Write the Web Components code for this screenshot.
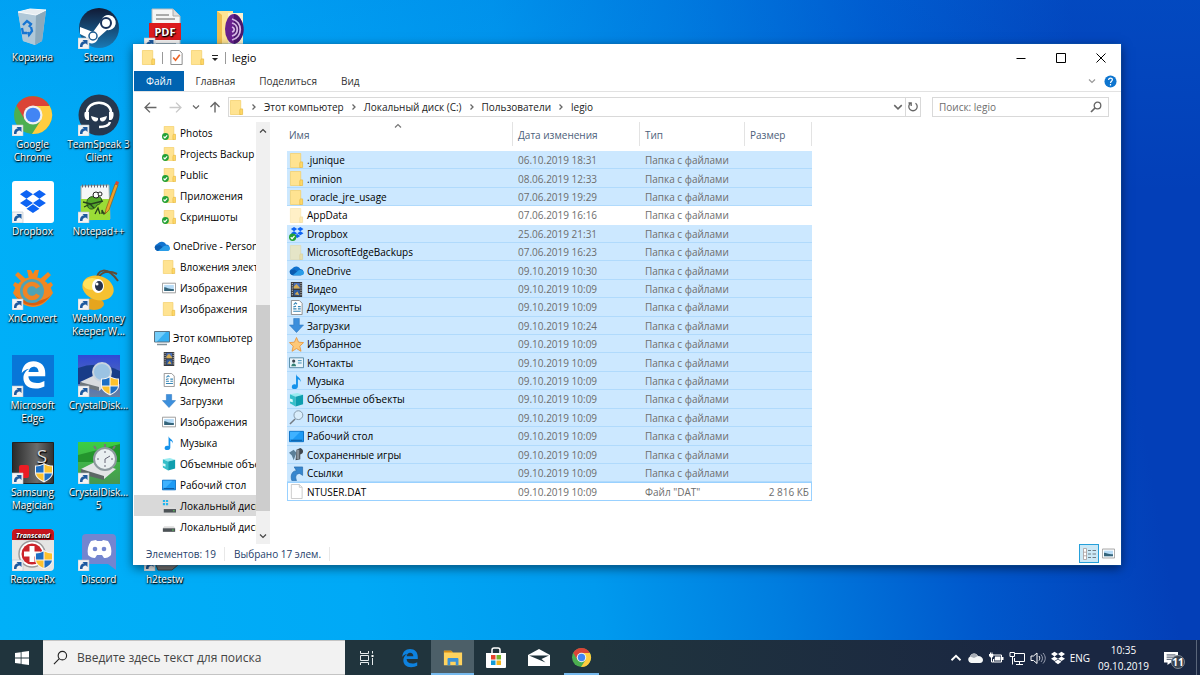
<!DOCTYPE html>
<html lang="ru">
<head>
<meta charset="utf-8">
<title>legio</title>
<style>
	html, body {
		height: 100%;
		margin: 0;
	}

	body {
		font: 10px/14px "Open Sans", "Noto Sans", sans-serif;
		color: #000;
		overflow: hidden;
	}
</style>
</head>
<body>
<desk-top></desk-top>

<script>
const FOLDER = `<path d="M1.500.500h11v15h-11z" fill="#ffe391" stroke="#f3cf69" stroke-width=".8"/><path d="M12 9.500h2.500v6h-3V11z" fill="#ffd866" stroke="#e8bc48" stroke-width=".8"/>`;
const TICK = `<circle cx="3.900" cy="12" r="3.900" fill="#23a136"/><path d="M1.800 12l1.500 1.600 2.600-3" fill="none" stroke="#fff" stroke-width="1.300"/>`;
const BOX = `<path d="M12 0l12 8-12 8L0 8zM36 0l12 8-12 8-12-8zM0 24l12-8 12 8-12 8zM36 16l12 8-12 8-12-8zM12 34.500l12-8 12 8-12 8z"/>`;
const SHIELD = `<g transform="translate(23 21)"><path d="M9 0c3 2 6 2.500 9 2.500V10c0 4-4 7-9 9.500C4 17 0 14 0 10V2.500C3 2.500 6 2 9 0z" fill="#f4f4f4"/><path d="M8.500 1.500V9.500H1V3.500c3 0 5-.7 7.500-2z" fill="#1d6fc4"/><path d="M9.500 1.500v8H17v-6c-3 0-5-.7-7.500-2z" fill="#fdc12d"/><path d="M8.500 10.500v7.500C4.500 16 1.500 13.500 1 10.500z" fill="#fdc12d"/><path d="M9.500 10.500v7.500c4-2 7-4.500 7.500-7.500z" fill="#1d6fc4"/></g>`;
const LINK = `<path d="M0 31h11v11H0z" fill="#f3f3f3" stroke="#b9c3cc" stroke-width=".6"/><path d="M2 40c0-4 1.500-5.500 4-5.500L4.500 33H9.500v5L8 36.500C5.500 36.500 4.500 38 4.500 40z" fill="#1e5a9f"/>`;
const CHROME = `<circle cx="21" cy="21" r="19" fill="#4caf50"/><path d="M21 11.500H37.500A19 19 0 0 1 20 40L29 26z" fill="#ffcd40"/><path d="M4.500 11.500L13 26 21 12H37.500A19 19 0 0 0 4.500 11.500z" fill="#db4437"/><circle cx="21" cy="21" r="9.500" fill="#f1f1f1"/><circle cx="21" cy="21" r="7.300" fill="#4285f4"/>`;
const EDGE = `<path d="M8 19C9 10 14 5 22 5c9 0 14 6 14 14v4H16c0 5 4 8 10 8 4 0 6-1 9-2.500v6.500c-3 1.500-6 2.500-11 2.500C15 37.500 10 32 10 25c0-5 3-9 7-11-4 .5-7 2.500-9 5zM16 18h12c0-4-2-6.500-6-6.500-3 0-5.500 2.500-6 6.500z"/>`;
const PICTURE = `<path d="M.5 2.500h15v11H.5z" fill="#fff" stroke="#929292"/><path d="M2.500 4.500h11v7h-11z" fill="#b8dcf7"/><path d="M2.500 7c3 0 4 2 11 2v2.500h-11z" fill="#35647a"/>`;
const DISK = `<path d="M1 9l1.500-2h11L15 9v4H1z" fill="#ddd"/><path d="M1 9.500h14v4H1z" fill="#4c5256"/><path d="M11.500 11.500h2" stroke="#60e060"/>`;

// each entry: [viewBox, markup]
const ICONS = {
	folder: ["0 0 16 16", FOLDER],
	faded: ["0 0 16 16", `<g opacity=".5">${FOLDER}</g>`],
	synced: ["0 0 16 16", `<g transform="translate(1 0)">${FOLDER}</g>${TICK}`],
	dropsync: ["0 0 16 16", `<g transform="translate(2 1) scale(.28)" fill="#0d63f3">${BOX}</g>${TICK}`],
	cloud: ["0 0 16 16", `<path d="M4 13a3.700 3.700 0 0 1-.5-7.200A5 5 0 0 1 12 6.500 3.300 3.300 0 0 1 13 13z" fill="#1173cf"/><path d="M6 7l7 6H4a3.700 3.700 0 0 1-3-5z" fill="#0a5cb0"/><path d="M4 13l6-5c3-1.500 6 .5 6 2.500S14.500 13 13 13z" fill="#2a9de8"/>`],
	video: ["0 0 16 16", `<path d="M2 0h12v16H2z" fill="#38393c"/><path d="M5 1h6.500v6H5z" fill="#4b70b8"/><path d="M5 8.500h6.500v6H5z" fill="#315b9f"/><path d="M5 5l3-3 3.500 4v1H5zM6 13l3-3 2 4z" fill="#d6ad54"/><path d="M3.500 1v14M12.800 1v14" stroke="#ddd" stroke-dasharray="1.200 1.200"/>`],
	docs: ["0 0 16 16", `<path d="M2.500.5h8.500l3 3v12H2.500z" fill="#fff" stroke="#8c8c8c"/><path d="M5 5l2-2 1.500 1.500M4.500 9.500h3.500M9.500 7h3M9.500 9.500h3M4.500 12h8M4.500 7.500l3-1" fill="none" stroke="#3585b5" stroke-width="1.200"/>`],
	download: ["0 0 16 16", `<path d="M5 .5h6v7h4.500L8 15.500.5 7.500H5z" fill="#3c8fdc" stroke="#2a75bf" stroke-width=".6"/>`],
	star: ["0 0 16 16", `<path d="M8 .5l2.200 5 5.300.5-4 3.700 1.300 5.500L8 12.300l-4.800 2.900 1.300-5.500-4-3.700 5.300-.5z" fill="#fdc878" stroke="#ea9437" stroke-width=".9"/>`],
	contact: ["0 0 16 16", `<path d="M.5 3h15v10.500H.5z" fill="#e8f4fb" stroke="#558aa5"/><circle cx="5" cy="6.500" r="1.700" fill="#3d4650"/><path d="M2.500 12c0-4 5-4 5 0z" fill="#348075"/><path d="M9.500 6h4M9.500 8.500h4" stroke="#358ab3"/>`],
	music: ["0 0 16 16", `<path d="M7.500 0c.5 3.500 5.500 3.500 5 8.500-.5-2-2-3-3-3v7.500c0 4-6.500 4-6.500 1s2.500-3.500 4.500-2.500z" fill="#1592eb"/>`],
	cube: ["0 0 16 16", `<path d="M1 2.500L9 1l6 2-8 2z" fill="#9aebf0"/><path d="M1 2.500L7 5v10.500L1 12z" fill="#35bfc9"/><path d="M7 5l8-2v10l-8 2.500z" fill="#0f9eae"/><path d="M1 7l3 1v3l-3-1z" fill="#d9fbfc"/>`],
	lens: ["0 0 16 16", `<path d="M1 15l5.500-5.500" stroke="#737b83" stroke-width="1.600"/><circle cx="10" cy="5.500" r="4.700" fill="#d9edfb" stroke="#8397a8"/>`],
	screen: ["0 0 16 16", `<path d="M.5 2.500h15v11H.5z" fill="#1d9bf5" stroke="#086cc0"/><path d="M2 12h12" stroke="#0b5398"/><path d="M1 3h11L4 11H1z" fill="#3fb2ff"/>`],
	games: ["0 0 16 16", `<path d="M0 6l5-3 3 3-3 8-2-5z" fill="#5c7f98"/><path d="M8 3l4-2c3 1 4 4 2 6l-2 1v5l-5 1z" fill="#3f464d"/><path d="M8 3h3v10H8z" fill="#879098"/>`],
	shortcut: ["0 0 16 16", `<path d="M3 15.500C1 9 4 5 8 5L5.500 1H14.500V10L11.500 8C8 8 6 11 8 15.500z" fill="#3686ce" stroke="#2368aa" stroke-width=".7"/>`],
	file: ["0 0 16 16", `<path d="M2.500.5h8.500l3 3v12H2.500z" fill="#fff" stroke="#bcbcbc" stroke-width=".8"/><path d="M11 .5v3h3" fill="none" stroke="#bcbcbc" stroke-width=".8"/>`],
	picture: ["0 0 16 16", PICTURE],
	pc: ["0 0 16 16", `<path d="M.5 1.500h15v10.500H.5z" fill="#36b0f2" stroke="#5d7381"/><path d="M1 2h11L3 11.500H1z" fill="#73cdfa"/><path d="M3 14.500h10" stroke="#81919b" stroke-width="1.500"/>`],
	disk: ["0 0 16 16", DISK],
	windisk: ["0 0 16 16", `<g transform="translate(1 2)">${DISK}</g><path d="M1 1h2.500v2.500H1zM4.500 1H7v2.500H4.500zM1 4.500h2.500V7H1zM4.500 4.500H7V7H4.500z" fill="#22b5ed"/>`],
	check: ["0 0 16 16", `<path d="M2 .5h9l3 3v12H2z" fill="#fff" stroke="#858585"/><path d="M4.500 8l2.500 3 4.500-6" fill="none" stroke="#ed6425" stroke-width="1.700"/>`],
	more: ["0 0 8 8", `<path d="M1 1.500h6" stroke="#222"/><path d="M1 4h6L4 7z" fill="#222"/>`],
	minimize: ["0 0 10 10", `<path d="M.5 5.500h9" stroke="#000"/>`],
	maximize: ["0 0 10 10", `<path d="M.5.5h9v9h-9z" fill="none" stroke="#000"/>`],
	close: ["0 0 10 10", `<path d="M.5.5l9 9M9.500.5l-9 9" stroke="#000"/>`],
	back: ["0 0 12 12", `<path d="M11.500 6H1.500M5.500 1.500L1 6l4.500 4.500" fill="none" stroke="#666" stroke-width="1.300"/>`],
	forward: ["0 0 12 12", `<path d="M.5 6h10M6.500 1.500L11 6l-4.500 4.500" fill="none" stroke="#c9c9c9" stroke-width="1.300"/>`],
	up: ["0 0 12 12", `<path d="M6 11.500V1.500M1.500 6L6 1.500 10.500 6" fill="none" stroke="#666" stroke-width="1.400"/>`],
	down: ["0 0 8 8", `<path d="M1 2.500L4 5.500l3-3" fill="none" stroke="currentColor" stroke-width="1.200"/>`],
	top: ["0 0 8 8", `<path d="M1 5.500L4 2.500l3 3" fill="none" stroke="currentColor" stroke-width="1.200"/>`],
	right: ["0 0 8 8", `<path d="M2.500 1.500L5 4 2.500 6.500" fill="none" stroke="#666" stroke-width="1.300"/>`],
	refresh: ["0 0 12 12", `<path d="M8.500 2.200A4.200 4.200 0 1 1 3.500 2.200M1.500 2h2.700v3" fill="none" stroke="#666" stroke-width="1.300"/>`],
	find: ["0 0 12 12", `<circle cx="7.500" cy="4.500" r="3.300" fill="none" stroke="#666" stroke-width="1.300"/><path d="M5 7L1 11" stroke="#666" stroke-width="1.700"/>`],
	help: ["0 0 14 14", `<circle cx="7" cy="7" r="6.500" fill="#0e75cf"/><path d="M5 5.500C5 2.500 9.200 2.700 9 5.300 8.800 6.700 7 6.700 7 8.500M7 9.800v1.500" fill="none" stroke="#fff" stroke-width="1.300"/>`],
	details: ["0 0 14 14", `<path d="M1.500 1.500h3v11h-3zM1.500 5.200h3M1.500 8.800h3" fill="#fff" stroke="#a79a9a" stroke-width=".8"/><path d="M6 3.500h3M10.500 3.500H14M6 7h3M10.500 7H14M6 10.500h3M10.500 10.500H14" stroke="#6f7d86"/>`],

	// desktop
	bin: ["0 0 42 42", `<path d="M6 5l28-2-4 31-7 4-12-4z" fill="#c5d5df" opacity=".9"/><path d="M6 5l18 3-1 30-12-4z" fill="#b0c8d8"/><path d="M24 8l10-5-4 31-7 4z" fill="#8da9bb"/><path d="M6 5l12-3 16 1-10 5z" fill="#e7edf1" stroke="#f7fafb"/><path d="M11 18l4-4 4 3-2 3M10 21l1 5h4M19 20l1 4-3 4-1-3" fill="none" stroke="#1675d2" stroke-width="2.300"/>`],
	steam: ["0 0 42 42", `<linearGradient id="st" x2="0" y2="1"><stop stop-color="#111a35"/><stop offset="1" stop-color="#1a79b4"/></linearGradient><circle cx="21" cy="21" r="20" fill="url(#st)"/><path d="M2 20l13 5 8-11a7.500 7.500 0 1 1 6 9l-9 8a6 6 0 0 1-12-1L2 27z" fill="#fff"/><circle cx="28" cy="16" r="5" fill="#fff" stroke="#17305a" stroke-width="2"/><circle cx="15" cy="29" r="4" fill="none" stroke="#1b5b91" stroke-width="1.500"/>${LINK}`],
	pdf: ["0 0 42 42", `<path d="M8 2h21l7 7v32H8z" fill="#f5f5f5" stroke="#bbb"/><path d="M29 2v7h7" fill="#ddd" stroke="#aaa"/><path d="M12 8h13M12 12h19M12 37h20" stroke="#aaa" stroke-width="2"/><path d="M5 16h32v17H5z" fill="#dc1a1e"/><text x="21" y="29" font-size="11" font-weight="700" fill="#fff" text-anchor="middle">PDF</text>${LINK}`],
	tor: ["0 0 42 42", `<path d="M7 4h16v38H7z" fill="#ffe494"/><path d="M7 4l5 4v34H7z" fill="#efbe52"/><path d="M18 6h15v36H18z" fill="#faf1d0"/><ellipse cx="24" cy="22" rx="9" ry="15" fill="#68218f"/><path d="M24 7c13 5 13 26 0 30" fill="#49176d"/><path d="M22 12c11 3 11 18 0 21M22 16c7 2 7 11 0 13M22 20c3 1 3 4 0 5" fill="none" stroke="#d6b6e5" stroke-width="1.800"/>`],
	chrome: ["0 0 42 42", CHROME + LINK],
	teamspeak: ["0 0 42 42", `<circle cx="21" cy="21" r="20.500" fill="#26384f"/><path d="M9 20C8 5 34 5 33 20" fill="none" stroke="#fff" stroke-width="2.500"/><path d="M7 18h4v8H9c-3-1-3-7-2-8zM31 18h4c1 1 1 7-2 8h-2z" fill="#fff"/><path d="M13 22l7 2c1 5-6 5-7-2zM29 22l-7 2c-1 5 6 5 7-2z" fill="#fff"/><path d="M32 28c-1 4-5 5-11 5" fill="none" stroke="#fff" stroke-width="2.500"/>${LINK}`],
	dropbox: ["0 0 42 42", `<rect width="42" height="42" rx="3" fill="#fff"/><g transform="translate(8 9) scale(.54)" fill="#0d63f3">${BOX}</g>${LINK}`],
	notepad: ["0 0 42 42", `<path d="M3 5l28-1 1 34-29 1z" fill="#f5f7f7" stroke="#a0aaa2"/><path d="M3 18h29v21H3z" fill="#9bdc36"/><path d="M4 5h26" stroke="#667" stroke-width="3" stroke-dasharray="1 2"/><path d="M10 26C6 18 13 13 19 17c5-4 7 6 0 7-2 5-8 5-9 2z" fill="#54a829" stroke="#27591d"/><circle cx="18" cy="14" r="3" fill="#fff" stroke="#222"/><circle cx="22" cy="13" r="2" fill="#fff" stroke="#222"/><path d="M5 21l8 2 12-3M6 26l6-3 4 4M17 33l3-6 2 6M24 33v-4l2 4 3-3" fill="none" stroke="#26421d" stroke-width="1.300"/><path d="M28 28l9-25 3 1-9 25-4 4z" fill="#eda12a" stroke="#8c5c1a" stroke-width=".7"/><path d="M37 3l1-3 3 1-1 3z" fill="#d84834"/>${LINK}`],
	xn: ["0 0 42 42", `<g fill="#f28722"><path d="M1 25C6 12 14 9 21 9s15 3 20 16C34 36 27 39 21 39S8 36 1 25z"/><path d="M17 11L15 2h4l2 4 2-4h4l-2 9zM10 14L3 7l3-3 8 7zM32 14l7-7-3-3-8 7zM5 22l-4-5 2-3 7 4zM37 22l4-5-2-3-7 4z"/></g><path d="M3 27c10 14 26 14 36 0-8 8-28 8-36 0z" fill="#d85f0d"/><circle cx="20" cy="23" r="12" fill="#4fa3b6"/><path d="M26 19.500a7 7 0 1 0 0 7" fill="none" stroke="#f08524" stroke-width="4.500"/>${LINK}`],
	bee: ["0 0 42 42", `<path d="M18 14C19 0 29-2 40 13M20 12C22 3 31 2 39 6" fill="none" stroke="#5f4b36" stroke-width="2"/><ellipse cx="16" cy="36" rx="10" ry="6" fill="#e6a51d"/><ellipse cx="20" cy="20" rx="16" ry="12" fill="#f6c131" transform="rotate(18 20 20)"/><ellipse cx="14" cy="16" rx="9" ry="6" fill="#ffe25d"/><ellipse cx="20" cy="18" rx="6" ry="7" fill="#fff"/><ellipse cx="21" cy="18" rx="4" ry="5" fill="#27314b"/><circle cx="19" cy="16" r="1.500" fill="#fff"/>${LINK}`],
	edge: ["0 0 42 42", `<path d="M0 0h42v42H0z" fill="#0876d8"/><g fill="#fff" transform="translate(3 2) scale(.84)">${EDGE}</g>${LINK}`],
	crystalinfo: ["0 0 42 42", `<linearGradient id="ci" x2="0" y2="1"><stop stop-color="#3049d6"/><stop offset="1" stop-color="#6681a4"/></linearGradient><path d="M0 0h42v42H0z" fill="url(#ci)"/><path d="M0 13Q20 5 42 16V29H0z" fill="#183c88"/><path d="M2 27l15-7 18 4-14 12z" fill="#d9dcdf"/><path d="M2 27l19 5v4L2 31z" fill="#6f777c"/><circle cx="24" cy="17" r="9" fill="#9bc3e3" stroke="#c9d4df" stroke-width="2"/>${SHIELD}${LINK}`],
	samsung: ["0 0 42 42", `<linearGradient id="sm"><stop stop-color="#292929"/><stop offset=".6" stop-color="#6c6c6c"/><stop offset="1" stop-color="#313131"/></linearGradient><path d="M.5.500h41v41H.5z" fill="url(#sm)" stroke="#222"/><rect x="7" y="23" width="10" height="13" rx="2" fill="#eb1c24"/><text x="30" y="21" font-size="19" fill="#ddd" text-anchor="middle">S</text>${SHIELD}${LINK}`],
	crystalmark: ["0 0 42 42", `<linearGradient id="cm" x2="0" y2="1"><stop stop-color="#3bcf42"/><stop offset="1" stop-color="#479650"/></linearGradient><path d="M0 0h42v42H0z" fill="url(#cm)"/><path d="M0 13Q20 8 42 2V20H0z" fill="#24952d"/><path d="M3 27l14-7 21 7-12 10z" fill="#e2e4e5"/><path d="M3 27l23 7v4L3 32z" fill="#5d6865"/><path d="M18 7l-2-3M27 5V2M35 7l2-3" stroke="#777" stroke-width="2"/><circle cx="27" cy="17" r="11" fill="#e9eff1" stroke="#8d999e" stroke-width="2"/><path d="M27 9v2M27 23v2M19 17h2M33 17h2M27 17l5-3M27 17v4" stroke="#667"/>${LINK}`],
	transcend: ["0 0 42 42", `<rect width="42" height="42" rx="4" fill="#e5e5e3"/><path d="M0 11V4q0-4 4-4h34q4 0 4 4v7z" fill="#c6141d"/><text x="21" y="9" font-size="7" font-weight="700" font-style="italic" fill="#fff" text-anchor="middle">Transcend</text><circle cx="20" cy="25" r="13" fill="#fff" stroke="#9b9b9b" stroke-width="1.500"/><circle cx="20" cy="25" r="10.500" fill="#cc252b"/><path d="M20 17v16M12 25h16" stroke="#fff" stroke-width="5"/>${SHIELD}${LINK}`],
	discord: ["0 0 42 42", `<path d="M8 5h26q4 0 4 4v32l-8-6H8q-4 0-4-4V9q0-4 4-4z" fill="#7385d0"/><path d="M13 12l5-1 1 1h5l1-1 5 1c3 4 4 9 3 14-3 3-5 3-7 3l-2-3h-5l-2 3c-3 0-5-1-7-3-1-5 0-10 3-14z" fill="#fff"/><circle cx="17" cy="20" r="2.300" fill="#7385d0"/><circle cx="26" cy="20" r="2.300" fill="#7385d0"/>${LINK}`],
	h2testw: ["0 0 42 42", `<path d="M9 28h20l6 7-7 6H14z" fill="#777" stroke="#444"/>${LINK}`],

	// taskbar
	windows: ["0 0 16 16", `<path d="M1 3l5.700-.8v5.400H1zM7.500 2.100L15 1v6.600H7.500zM1 8.400h5.700v5.400L1 13zM7.500 8.400H15V15l-7.500-1.100z" fill="#fff"/>`],
	loupe: ["0 0 16 16", `<circle cx="10" cy="6" r="4.500" fill="none" stroke="#222" stroke-width="1.200"/><path d="M6.700 9.300L1 15" stroke="#222" stroke-width="1.200"/>`],
	taskview: ["0 0 16 16", `<path d="M1.500 1v2.500h8V1M1.500 5.500h8v5h-8zM1.500 15v-2.500h8V15M13.500 1v2.500M13.500 8v7" fill="none" stroke="#e5eaec"/><path d="M12.500 5h2v2h-2z" fill="#fff"/>`],
	edgeblue: ["6 3 32 36", `<g fill="#0e82df">${EDGE}</g>`],
	explorer: ["0 0 22 22", `<path d="M1 3h8l2 2h10v14H1z" fill="#ffd35e"/><path d="M1 3h8l2 2H1z" fill="#d78e14"/><path d="M5 19v-7q0-1 1-1h10q1 0 1 1v7h-3v-4H8v4z" fill="#3b92d8"/>`],
	store: ["0 0 22 22", `<path d="M7 6V3q0-2 2-2h4q2 0 2 2v3" fill="none" stroke="#fff" stroke-width="1.500"/><path d="M1 6h20v14q0 1-1 1H2q-1 0-1-1z" fill="#fff"/><path d="M6 8h4.500v4.500H6z" fill="#e7432c"/><path d="M11.500 8H16v4.500h-4.500z" fill="#77b52c"/><path d="M6 13.500h4.500V18H6z" fill="#139bd7"/><path d="M11.500 13.500H16V18h-4.500z" fill="#f5b51d"/>`],
	mail: ["0 0 22 22", `<path d="M0 8l11-6 11 6v11H0z" fill="#fff"/><path d="M1 8.500h20L13.500 12l4 3.500z" fill="#20333c"/>`],
	chromebar: ["0 0 42 42", CHROME],
	traycloud: ["0 0 16 16", `<path d="M4 13a3.500 3.500 0 0 1-1-6.500C4 3 9 2 11 6c3 0 5 2 5 4s-1.500 3-3 3z" fill="#f5f7f8"/><path d="M3 6.500C4 3 9 2 11 6L7 8z" fill="#a9afb8"/>`],
	battery: ["0 0 16 16", `<path d="M5.500 5h8v7h-8v-3" fill="none" stroke="#fff"/><path d="M7 6.500h5.500v4H6.500zM14 7h1.500v3H14zM1 4h4.500v2L4.500 7.500h-2L1 6z" fill="#fff"/><path d="M2.500 2.500v2M4 2.500v2M3.500 7v5h2" fill="none" stroke="#fff"/>`],
	network: ["0 0 16 16", `<path d="M6 3.500h9.500v8h-10V8M10.500 11.500V14M7 14.500h7M3.500 7v7.500" fill="none" stroke="#fff"/><path d="M1 2.500h4.500v4H1z" fill="none" stroke="#fff"/>`],
	sound: ["0 0 16 16", `<path d="M1 6h2.500L7 3v10.500L3.500 10.500H1z" fill="none" stroke="#fff"/><path d="M9 6c1 1.500 1 3 0 4.500" fill="none" stroke="#fff"/><path d="M11 4.500c2 2.500 2 5 0 7.500M13 3c3 3.500 3 7 0 10.500" fill="none" stroke="#9ba2b3"/>`],
	traybox: ["0 0 48 43", `<g fill="#fff">${BOX}</g>`],
	notify: ["0 0 16 16", `<path d="M0 1h16v12H8l-4 3v-3H0z" fill="#fff"/><path d="M3 4.500h10M3 7h10M3 9.500h6" stroke="#26314a"/>`],
};

class UiIcon extends HTMLElement {
	constructor() {
		super();
		this.attachShadow({ mode: "open" });
	}

	connectedCallback() {
		const [viewBox, markup] = ICONS[this.getAttribute("name")];
		const size = this.getAttribute("size") || 16;

		this.shadowRoot.innerHTML = `
      <style>
        :host { display: block; flex: none; width: ${size}px; height: ${size}px; }
        svg { display: block; width: 100%; height: 100%; }
      </style>
      <svg viewBox="${viewBox}" aria-hidden="true">${markup}</svg>
    `;
	}
}

class DesktopIcon extends HTMLElement {
	constructor() {
		super();
		this.attachShadow({ mode: "open" });
	}

	connectedCallback() {
		this.shadowRoot.innerHTML = `
      <style>
        :host { display: block; }
        button {
          display: flex;
          flex-direction: column;
          align-items: center;
          gap: 2px;
          width: 100%;
          padding: 0;
          border: 0;
          background: none;
          font: inherit;
          line-height: 13px;
          color: #fff;
          text-shadow: 0 1px 2px #000, 1px 1px 1px #000;
        }
        span { white-space: nowrap; }
      </style>
      <button><ui-icon name="${this.getAttribute("icon")}" size="42"></ui-icon><span><slot></slot></span></button>
    `;
	}
}

class DeskTop extends HTMLElement {
	constructor() {
		super();
		this.attachShadow({ mode: "open" });

		const icons = [
			["bin", "Корзина"], ["chrome", "Google<br>Chrome"], ["dropbox", "Dropbox"], ["xn", "XnConvert"],
			["edge", "Microsoft<br>Edge"], ["samsung", "Samsung<br>Magician"], ["transcend", "RecoveRx"],
			["steam", "Steam"], ["teamspeak", "TeamSpeak 3<br>Client"], ["notepad", "Notepad++"], ["bee", "WebMoney<br>Keeper W..."],
			["crystalinfo", "CrystalDisk..."], ["crystalmark", "CrystalDisk...<br>5"], ["discord", "Discord"],
		];
		const cell = ([icon, label]) => `<desktop-icon icon="${icon}">${label}</desktop-icon>`;

		this.shadowRoot.innerHTML = `
      <style>
        :host {
          display: flex;
          flex-direction: column;
          height: 100%;
        }
        main {
          position: relative;
          flex: 1;
          min-height: 0;
          background: linear-gradient(80deg, #00b0f8 0%, #00a9f6 28%, #009aee 46%, #007ddf 60%, #0058cc 75%, #033fb8 90%);
        }
        main::after {
          content: "";
          position: absolute;
          inset: 0;
          background: linear-gradient(#0070e033, transparent 30%);
        }
        .grid {
          position: relative;
          z-index: 1;
          display: grid;
          grid-auto-flow: column;
          grid-template-rows: repeat(7, 87px);
          grid-auto-columns: 65px;
          column-gap: 1px;
          justify-content: start;
          padding-top: 7px;
        }
        desktop-icon[icon="pdf"] { grid-area: 1 / 3; }
        desktop-icon[icon="h2testw"] { grid-area: 7 / 3; }
        desktop-icon[icon="tor"] { grid-area: 1 / 4; }
        explorer-window {
          position: absolute;
          z-index: 2;
          inset: 44px 79px 75px 133px;
        }
      </style>
      <main>
        <div class="grid">
          ${icons.map(cell).join("")}
          ${cell(["pdf", ""])}
          ${cell(["h2testw", "h2testw"])}
          ${cell(["tor", ""])}
        </div>
        <explorer-window></explorer-window>
      </main>
      <task-bar></task-bar>
    `;
	}
}

class NavItem extends HTMLElement {
	constructor() {
		super();
		this.attachShadow({ mode: "open" });
	}

	connectedCallback() {
		this.shadowRoot.innerHTML = `
      <style>
        :host { display: block; }
        :host([root]) { margin-top: 8px; }
        a {
          display: flex;
          align-items: center;
          gap: 4px;
          height: 21px;
          padding-left: 28px;
          color: inherit;
          text-decoration: none;
          white-space: nowrap;
          overflow: hidden;
        }
        :host([root]) a { padding-left: 20px; gap: 3px; }
        :host([current]) a { background: #d9d9d9; }
      </style>
      <a href="#"><ui-icon name="${this.getAttribute("icon")}" size="${this.hasAttribute("root") ? 16 : 14}"></ui-icon><slot></slot></a>
    `;
	}
}

class NavPane extends HTMLElement {
	constructor() {
		super();
		this.attachShadow({ mode: "open" });
		this.shadowRoot.innerHTML = `
      <style>
        :host { display: flex; }
        nav { flex: 1; min-width: 0; overflow: hidden; }
        .bar {
          display: flex;
          flex-direction: column;
          align-items: center;
          justify-content: space-between;
          width: 14px;
          padding: 5px 0 4px;
          box-sizing: border-box;
          color: #444;
          background: linear-gradient(#cdcdcd, #cdcdcd) 0 183px / 100% 206px no-repeat #f0f0f0;
        }
      </style>
      <nav>
        <nav-item icon="synced">Photos</nav-item>
        <nav-item icon="synced">Projects Backup</nav-item>
        <nav-item icon="synced">Public</nav-item>
        <nav-item icon="synced">Приложения</nav-item>
        <nav-item icon="synced">Скриншоты</nav-item>
        <nav-item icon="cloud" root>OneDrive - Person</nav-item>
        <nav-item icon="folder">Вложения элект</nav-item>
        <nav-item icon="picture">Изображения</nav-item>
        <nav-item icon="folder">Изображения</nav-item>
        <nav-item icon="pc" root>Этот компьютер</nav-item>
        <nav-item icon="video">Видео</nav-item>
        <nav-item icon="docs">Документы</nav-item>
        <nav-item icon="download">Загрузки</nav-item>
        <nav-item icon="picture">Изображения</nav-item>
        <nav-item icon="music">Музыка</nav-item>
        <nav-item icon="cube">Объемные объе</nav-item>
        <nav-item icon="screen">Рабочий стол</nav-item>
        <nav-item icon="windisk" current>Локальный диск</nav-item>
        <nav-item icon="disk">Локальный диск</nav-item>
      </nav>
      <div class="bar"><ui-icon name="top" size="8"></ui-icon><ui-icon name="down" size="8"></ui-icon></div>
    `;
	}
}

class FileList extends HTMLElement {
	constructor() {
		super();
		this.attachShadow({ mode: "open" });

		const files = [
			["folder", ".junique", "06.10.2019 18:31"],
			["folder", ".minion", "08.06.2019 12:33"],
			["folder", ".oracle_jre_usage", "07.06.2019 19:29"],
			["faded", "AppData", "07.06.2019 16:16"],
			["dropsync", "Dropbox", "25.06.2019 21:31"],
			["faded", "MicrosoftEdgeBackups", "07.06.2019 16:23"],
			["cloud", "OneDrive", "09.10.2019 10:30"],
			["video", "Видео", "09.10.2019 10:09"],
			["docs", "Документы", "09.10.2019 10:09"],
			["download", "Загрузки", "09.10.2019 10:24"],
			["star", "Избранное", "09.10.2019 10:09"],
			["contact", "Контакты", "09.10.2019 10:09"],
			["music", "Музыка", "09.10.2019 10:09"],
			["cube", "Объемные объекты", "09.10.2019 10:09"],
			["lens", "Поиски", "09.10.2019 10:09"],
			["screen", "Рабочий стол", "09.10.2019 10:09"],
			["games", "Сохраненные игры", "09.10.2019 10:09"],
			["shortcut", "Ссылки", "09.10.2019 10:09"],
			["file", "NTUSER.DAT", "09.10.2019 10:09", 'Файл "DAT"', "2 816 КБ"],
		];
		const state = (name) => name === "AppData" ? "" : name === "NTUSER.DAT" ? "focus" : "selected";

		this.shadowRoot.innerHTML = `
      <style>
        :host { display: block; }
        table {
          width: 525px;
          height: 379px;
          table-layout: fixed;
          border-collapse: separate;
          border-spacing: 0;
        }
        th, td {
          padding: 0 0 0 6px;
          font-weight: 400;
          text-align: left;
          white-space: nowrap;
        }
        th {
          position: relative;
          height: 29px;
          padding-bottom: 4px;
          box-sizing: border-box;
          color: #4c607a;
          background: linear-gradient(#e3e3e3, #e3e3e3) 0 0 / 1px 24px no-repeat;
        }
        th:first-child { padding-left: 2px; background: none; }
        th:last-child {
          background:
            linear-gradient(#e3e3e3, #e3e3e3) 0 0 / 1px 24px no-repeat,
            linear-gradient(#e3e3e3, #e3e3e3) 100% 0 / 1px 24px no-repeat;
        }
        th ui-icon { position: absolute; top: 0; left: 107px; color: #777; }
        td { color: #6d6d6d; line-height: 16px; }
        td:first-child { padding-left: 2px; color: #000; }
        td:last-child { padding-right: 3px; text-align: right; }
        td div { display: flex; align-items: center; gap: 3px; }
        .selected td { background: #cce8ff; box-shadow: inset 0 -1px #b0dafc; }
        .focus td { box-shadow: inset 0 -1px #99d1ff, inset 0 1px #99d1ff; }
        .focus td:first-child { box-shadow: inset 1px 1px #99d1ff, inset 0 -1px #99d1ff; }
        .focus td:last-child { box-shadow: inset -1px -1px #99d1ff, inset 0 1px #99d1ff; }
      </style>
      <table>
        <colgroup><col style="width:225px"><col style="width:127px"><col style="width:105px"><col></colgroup>
        <thead><tr><th>Имя<ui-icon name="top" size="8"></ui-icon></th><th>Дата изменения</th><th>Тип</th><th>Размер</th></tr></thead>
        <tbody>
          ${files.map(([icon, name, date, type = "Папка с файлами", size = ""]) => `
          <tr class="${state(name)}">
            <td><div><ui-icon name="${icon}" size="15"></ui-icon>${name}</div></td>
            <td>${date}</td><td>${type}</td><td>${size}</td>
          </tr>`).join("")}
        </tbody>
      </table>
    `;
	}
}

class ExplorerWindow extends HTMLElement {
	constructor() {
		super();
		this.attachShadow({ mode: "open" });
		this.shadowRoot.innerHTML = `
      <style>
        :host {
          display: flex;
          flex-direction: column;
          padding-left: 1px;
          background: #fff;
          box-shadow: 0 0 0 1px #1673b033, 0 3px 10px #0008;
        }
        header, .tabs, .address, .status, .content, .path { display: flex; align-items: center; }
        button {
          display: grid;
          place-items: center;
          padding: 0;
          border: 0;
          background: none;
          font: inherit;
          color: inherit;
        }
        header { height: 27px; gap: 6px; padding-left: 7px; }
        header h1 { flex: 1; margin: 0; font: inherit; font-size: 11px; }
        header i { width: 1px; height: 12px; background: #999; }
        .controls { display: flex; }
        .controls button { width: 40px; height: 27px; }
        .tabs {
          height: 20px;
          padding-right: 4px;
          border-bottom: 1px solid #e2e2e2;
          color: #333;
        }
        .tabs button { height: 20px; padding: 0 12px; }
        .tabs .on { background: #0063b1; color: #fff; }
        .tabs .fold { margin-left: auto; padding: 0 8px; color: #999; }
        .tabs .help { padding: 0; }
        .address { height: 30px; gap: 7px; padding: 0 12px 0 10px; color: #666; }
        .address .next { padding-left: 5px; }
        .address .history { width: 13px; }
        .path, .search {
          height: 20px;
          box-sizing: border-box;
          border: 1px solid #d9d9d9;
        }
        .path { flex: 1; gap: 6px; }
        .path a { color: #222; text-decoration: none; }
        .ends { display: flex; align-items: center; gap: 2px; margin-left: auto; }
        .reload { width: 15px; height: 18px; border-left: 1px solid #d9d9d9; }
        .search { display: flex; align-items: center; width: 177px; padding: 0 6px; margin-left: 4px; }
        input {
          flex: 1;
          min-width: 0;
          padding: 0;
          border: 0;
          outline: 0;
          background: none;
          font: inherit;
          color: #6d6d6d;
        }
        input::placeholder { color: #6d6d6d; opacity: 1; }
        .content { flex: 1; min-height: 0; align-items: stretch; }
        nav-pane { width: 136px; }
        file-list { flex: 1; padding-left: 17px; }
        .status { height: 21px; gap: 9px; padding: 0 6px 2px 12px; box-sizing: border-box; color: #26406b; }
        .status span { padding-right: 8px; border-right: 1px solid #e8e8e8; }
        .views { display: flex; align-items: center; gap: 3px; margin-left: auto; }
        .views .on { width: 20px; height: 19px; box-sizing: border-box; background: #cbe8f6; border: 1px solid #26a0da; }
      </style>
      <header>
        <ui-icon name="folder" size="15"></ui-icon><i></i>
        <ui-icon name="check" size="15"></ui-icon>
        <ui-icon name="folder" size="15"></ui-icon>
        <ui-icon name="more" size="8"></ui-icon><i></i>
        <h1>legio</h1>
        <div class="controls">
          <button aria-label="Свернуть"><ui-icon name="minimize" size="10"></ui-icon></button>
          <button aria-label="Развернуть"><ui-icon name="maximize" size="10"></ui-icon></button>
          <button aria-label="Закрыть"><ui-icon name="close" size="10"></ui-icon></button>
        </div>
      </header>
      <div class="tabs">
        <button class="on">Файл</button>
        <button>Главная</button>
        <button>Поделиться</button>
        <button>Вид</button>
        <button class="fold" aria-label="Свернуть ленту"><ui-icon name="down" size="8"></ui-icon></button>
        <button class="help" aria-label="Справка"><ui-icon name="help" size="13"></ui-icon></button>
      </div>
      <div class="address">
        <button aria-label="Назад"><ui-icon name="back" size="13"></ui-icon></button>
        <button class="next" aria-label="Вперед"><ui-icon name="forward" size="13"></ui-icon></button>
        <button class="history" aria-label="Журнал"><ui-icon name="down" size="8"></ui-icon></button>
        <button aria-label="Вверх"><ui-icon name="up" size="12"></ui-icon></button>
        <div class="path">
          <ui-icon name="folder" size="15"></ui-icon>
          <ui-icon name="right" size="8"></ui-icon><a href="#">Этот компьютер</a>
          <ui-icon name="right" size="8"></ui-icon><a href="#">Локальный диск (C:)</a>
          <ui-icon name="right" size="8"></ui-icon><a href="#">Пользователи</a>
          <ui-icon name="right" size="8"></ui-icon><a href="#">legio</a>
          <div class="ends">
            <button aria-label="Список"><ui-icon name="down" size="10"></ui-icon></button>
            <button class="reload" aria-label="Обновить"><ui-icon name="refresh" size="12"></ui-icon></button>
          </div>
        </div>
        <label class="search">
          <input type="text" placeholder="Поиск: legio" aria-label="Поиск: legio">
          <ui-icon name="find" size="12"></ui-icon>
        </label>
      </div>
      <div class="content">
        <nav-pane></nav-pane>
        <file-list></file-list>
      </div>
      <div class="status">
        <span>Элементов: 19</span>
        <span>Выбрано 17 элем.</span>
        <div class="views">
          <button class="on" aria-label="Таблица"><ui-icon name="details" size="14"></ui-icon></button>
          <button aria-label="Эскизы"><ui-icon name="picture" size="13"></ui-icon></button>
        </div>
      </div>
    `;
	}
}

class TaskBar extends HTMLElement {
	constructor() {
		super();
		this.attachShadow({ mode: "open" });
		this.shadowRoot.innerHTML = `
      <style>
        :host {
          display: flex;
          height: 35px;
          color: #fff;
          background: linear-gradient(90deg, #20343d 50%, #1a2742 85%);
        }
        button {
          display: grid;
          place-items: center;
          width: 43px;
          padding: 0;
          border: 0;
          background: none;
          font: inherit;
          color: inherit;
        }
        label {
          display: flex;
          align-items: center;
          gap: 9px;
          width: 302px;
          padding: 0 10px;
          box-sizing: border-box;
          background: #f2f2f2;
          border: solid #c4c4c4;
          border-width: 1px 0;
        }
        input {
          flex: 1;
          min-width: 0;
          padding: 0;
          border: 0;
          outline: 0;
          background: none;
          font: inherit;
          font-size: 12px;
        }
        input::placeholder { color: #444; opacity: 1; }
        .active { background: #4c5f68; }
        .active, .running { box-shadow: inset 0 -2px #76b9ed; }
        .running { width: 35px; margin-left: 4px; }
        .tray { display: flex; align-items: center; gap: 5px; margin-left: auto; }
        .tray button { width: auto; }
        .clock { padding-left: 3px; text-align: center; line-height: 16px; }
        .tray .alerts { position: relative; padding: 0 13px 0 10px; }
        .alerts b {
          position: absolute;
          left: 17px;
          top: 4px;
          width: 14px;
          border-radius: 7px;
          background: #39424f;
          border: 1px solid #7c8590;
          box-sizing: border-box;
          line-height: 12px;
          text-align: center;
        }
        .tray .peek { align-self: stretch; width: 4px; border-left: 1px solid #5a667a; }
      </style>
      <button aria-label="Пуск"><ui-icon name="windows"></ui-icon></button>
      <label><ui-icon name="loupe" size="15"></ui-icon><input type="text" placeholder="Введите здесь текст для поиска" aria-label="Введите здесь текст для поиска"></label>
      <button aria-label="Представление задач"><ui-icon name="taskview"></ui-icon></button>
      <button aria-label="Edge"><ui-icon name="edgeblue" size="20"></ui-icon></button>
      <button class="active" aria-label="Проводник"><ui-icon name="explorer" size="20"></ui-icon></button>
      <button aria-label="Магазин"><ui-icon name="store" size="22"></ui-icon></button>
      <button aria-label="Почта"><ui-icon name="mail" size="22"></ui-icon></button>
      <button class="running" aria-label="Chrome"><ui-icon name="chromebar" size="21"></ui-icon></button>
      <div class="tray">
        <button aria-label="Скрытые значки"><ui-icon name="top" size="12"></ui-icon></button>
        <ui-icon name="traycloud"></ui-icon>
        <ui-icon name="battery"></ui-icon>
        <ui-icon name="network"></ui-icon>
        <ui-icon name="sound"></ui-icon>
        <ui-icon name="traybox" size="14"></ui-icon>
        <button>ENG</button>
        <div class="clock">10:35<br>09.10.2019</div>
        <button class="alerts" aria-label="Уведомления"><ui-icon name="notify" size="14"></ui-icon><b>11</b></button>
        <button class="peek" aria-label="Свернуть все"></button>
      </div>
    `;
	}
}

customElements.define("ui-icon", UiIcon);
customElements.define("desktop-icon", DesktopIcon);
customElements.define("nav-item", NavItem);
customElements.define("nav-pane", NavPane);
customElements.define("file-list", FileList);
customElements.define("explorer-window", ExplorerWindow);
customElements.define("task-bar", TaskBar);
customElements.define("desk-top", DeskTop);
</script>
</body>
</html>
